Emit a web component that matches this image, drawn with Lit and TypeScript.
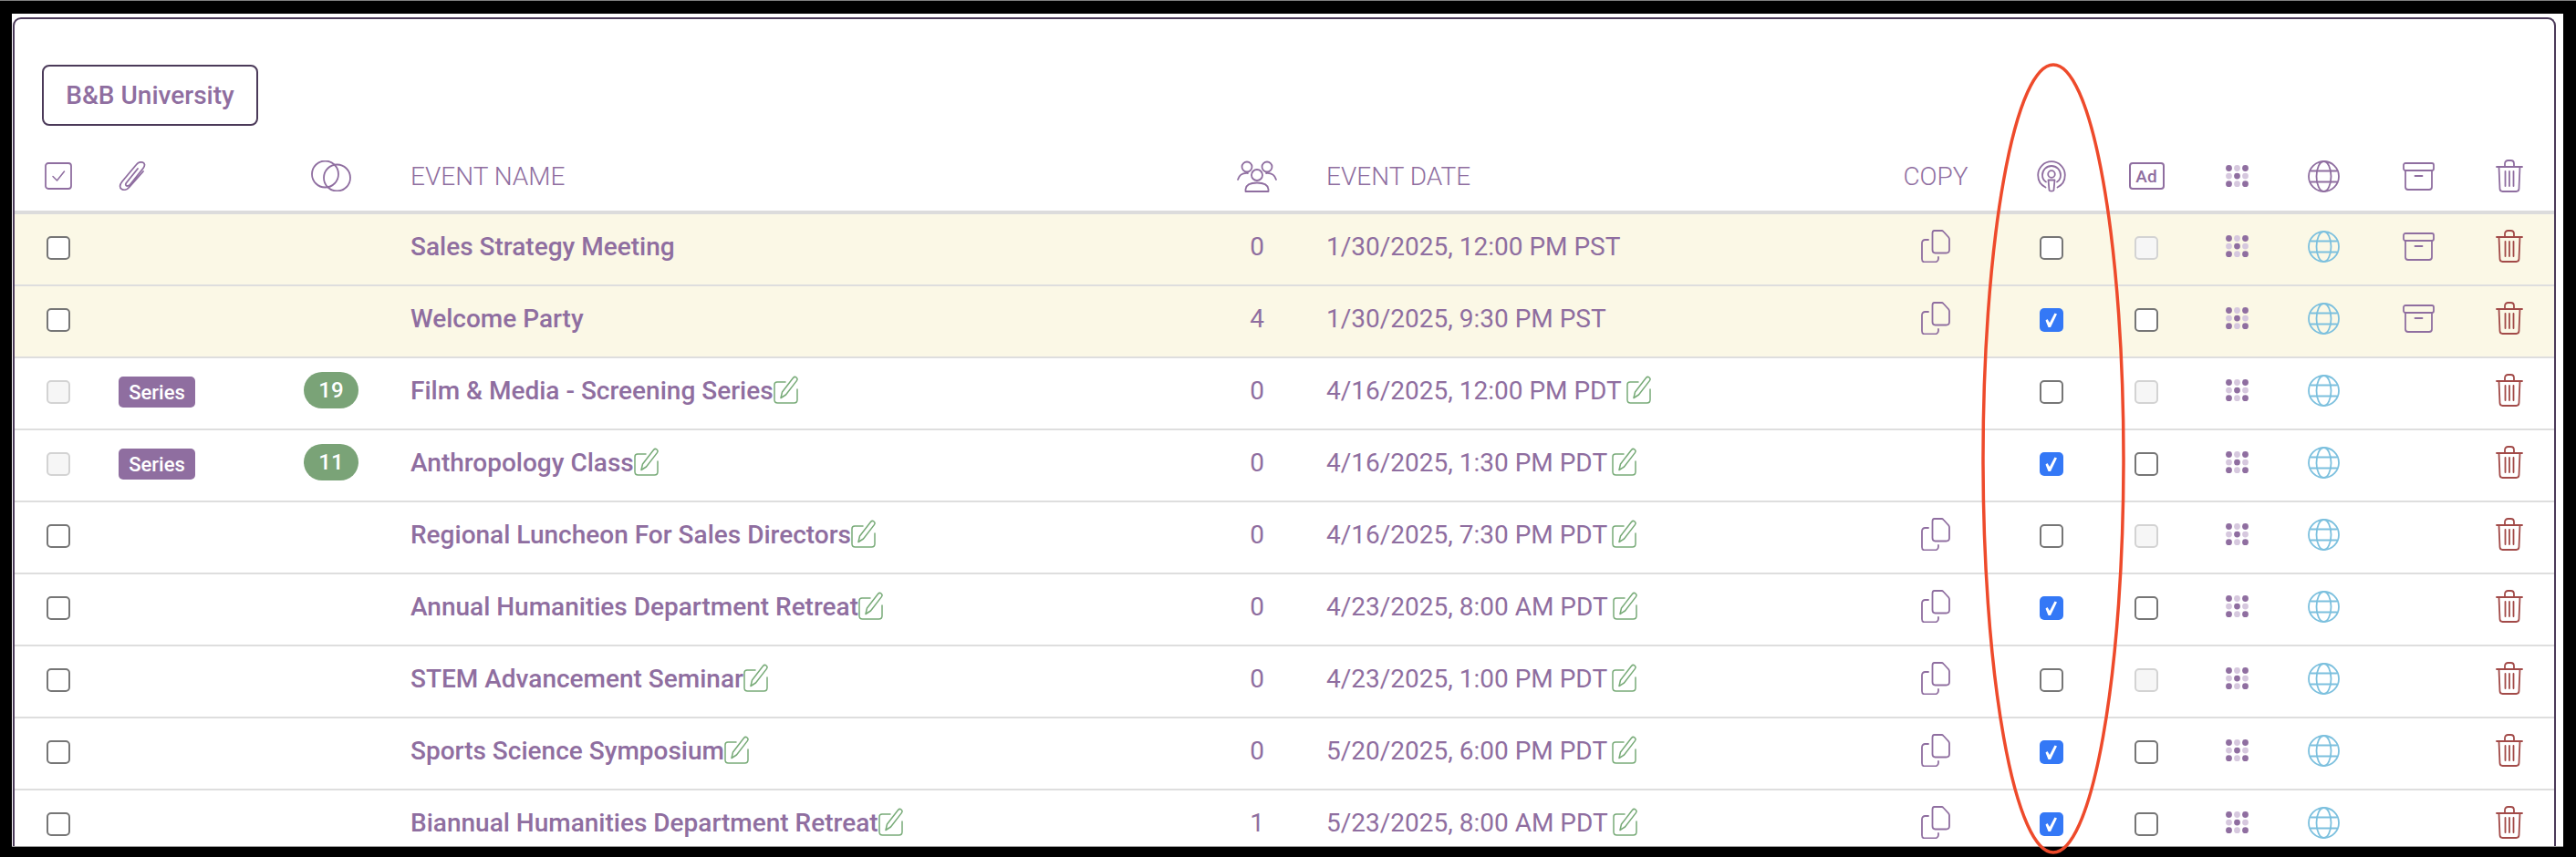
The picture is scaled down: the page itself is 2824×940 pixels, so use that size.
import { LitElement, html, css, svg } from "lit";
import { customElement } from "lit/decorators.js";

type Ck = "off" | "on" | "dis";
interface Row {
  name: string; date: string; count: number; hl?: boolean; series?: number; edit?: boolean;
  left: Ck; pod: Ck; ad: Ck; copy: boolean; archive?: boolean;
}

const rows: Row[] = [
  { name: "Sales Strategy Meeting", date: "1/30/2025, 12:00 PM PST", count: 0, hl: true, left: "off", pod: "off", ad: "dis", copy: true, archive: true },
  { name: "Welcome Party", date: "1/30/2025, 9:30 PM PST", count: 4, hl: true, left: "off", pod: "on", ad: "off", copy: true, archive: true },
  { name: "Film & Media - Screening Series", date: "4/16/2025, 12:00 PM PDT", count: 0, series: 19, edit: true, left: "dis", pod: "off", ad: "dis", copy: false },
  { name: "Anthropology Class", date: "4/16/2025, 1:30 PM PDT", count: 0, series: 11, edit: true, left: "dis", pod: "on", ad: "off", copy: false },
  { name: "Regional Luncheon For Sales Directors", date: "4/16/2025, 7:30 PM PDT", count: 0, edit: true, left: "off", pod: "off", ad: "dis", copy: true },
  { name: "Annual Humanities Department Retreat", date: "4/23/2025, 8:00 AM PDT", count: 0, edit: true, left: "off", pod: "on", ad: "off", copy: true },
  { name: "STEM Advancement Seminar", date: "4/23/2025, 1:00 PM PDT", count: 0, edit: true, left: "off", pod: "off", ad: "dis", copy: true },
  { name: "Sports Science Symposium", date: "5/20/2025, 6:00 PM PDT", count: 0, edit: true, left: "off", pod: "on", ad: "off", copy: true },
  { name: "Biannual Humanities Department Retreat", date: "5/23/2025, 8:00 AM PDT", count: 1, edit: true, left: "off", pod: "on", ad: "off", copy: true },
];

const P = "#8f6ea0";
const ic = (w: number, h: number, body: unknown, cls = "") =>
  html`<svg class="ic ${cls}" width=${w} height=${h} viewBox="0 0 ${w} ${h}" fill="none" stroke="currentColor" stroke-width="1.800" stroke-linecap="round" stroke-linejoin="round">${body}</svg>`;

const iconCheckBox = () => ic(30, 30, svg`<rect x="1" y="1" width="28" height="28" rx="3"/><path d="M9 15.500l4.500 4.500L21.500 10" stroke-width="1.500"/>`);
const iconClip = () => ic(30, 32, svg`<path d="M21 8L8.500 23.500C7 25.500 8 27 9.500 27 11 27 12 26.500 13 25L27 7.500C29.500 4 28.500 2 26.500 1.200 24 .3 21.500 1 19.500 3.500L4 22C.8 26 1 29 3.500 30.500 6 32 9.500 31 12 28L27 11"/>`);
const iconRings = () => ic(44, 34, svg`<circle cx="15.500" cy="15" r="14.500" /><circle cx="28.500" cy="19" r="14.500"/>`);
const iconPeople = () => ic(44, 35, svg`<circle cx="11" cy="7" r="5.500"/><circle cx="33" cy="7" r="5.500"/><circle cx="22" cy="16" r="6"/><path d="M1 21c1.500-5 5-7.500 11-7"/><path d="M43 21c-1.500-5-5-7.500-11-7"/><path d="M9.500 34v-2.500C10 27 15 24.500 22 24.500s12 2.500 12.500 7V34z"/>`);
const iconPod = () => ic(32, 35, svg`<path d="M9.500 29.500C4.500 27 1.200 22 1.200 16 1.200 7.800 7.800 1.200 16 1.200S30.800 7.800 30.800 16c0 6-3.300 11-8.300 13.500"/><path d="M10 23.500C7.500 22 6 19.200 6 16c0-5.500 4.500-10 10-10s10 4.500 10 10c0 3.200-1.500 6-4 7.500"/><circle cx="16" cy="15" r="3.800"/><path d="M12.500 21.500h7l-1 11c-.2 1.600-4.800 1.600-5 0z"/>`);
const iconAd = () => html`<span class="ad">Ad</span>`;
const iconDots = () => {
  const dots = [];
  for (let r = 0; r < 3; r++) for (let c = 0; c < 3; c++) {
    const dark = (r + c) % 2 === 0;
    dots.push(svg`<circle cx=${3.500 + c * 9} cy=${3.500 + r * 8.600} r="3.400" fill=${dark ? P : "#d6c8de"} stroke="none"/>`);
  }
  return ic(25, 25, dots);
};
const iconGlobe = (cls = "") => ic(35, 35, svg`<circle cx="17.500" cy="17.500" r="16.500"/><ellipse cx="17.500" cy="17.500" rx="8" ry="16.500"/><path d="M3.500 11.500h28M3.500 23.500h28"/>`, cls);
const iconArchive = () => ic(35, 31, svg`<rect x="1" y="1" width="33" height="8" rx="2"/><path d="M3 9v18c0 2 1 3 3 3h23c2 0 3-1 3-3V9"/><path d="M13.500 15h8"/>`);
const iconTrash = (cls = "") => ic(30, 36, svg`<path d="M1 8h28"/><path d="M10 8V4.500C10 2.500 11.500 1 13.500 1h3C18.500 1 20 2.500 20 4.500V8"/><path d="M3.500 8l1 24c.1 1.800 1.300 3 3 3h15c1.700 0 2.900-1.200 3-3l1-24"/><path d="M10.500 13v16M15 13v16M19.500 13v16"/>`, cls);
const iconCopy = () => ic(32, 36, svg`<path d="M17 1h-2.500C13.500 1 12.500 2 12.500 4v18c0 2 1 3.500 3 3.500h12c2 0 3.500-1.500 3.500-3.500V10.500c0-1-.5-1.800-1-2.500l-5.500-6c-.6-.7-1.300-1-2-1z"/><path d="M8 11H4.500C2.500 11 1 12.500 1 14.500V32c0 2 1.500 3.500 3.500 3.500H15c2 0 4-1.500 4-4v-1.500" />`);
const iconEdit = () => ic(27, 31, svg`<path d="M13 7H4C2 7 1 8.500 1 10v16.500C1 28.500 2.500 30 4.500 30h18c2 0 3.500-1.500 3.500-3.500V15" stroke-width="1.500"/><path d="M8 24.500l1.500-6.500L21.500 2.500c1-1.200 2.400-1.400 3.500-.5 1.100.9 1.300 2.400.4 3.600L13.500 21z" stroke-width="1.500"/>`, "edit");

const box = (s: Ck) => html`<span class="box ${s}">${s === "on"
  ? html`<svg width="26" height="26" viewBox="0 0 26 26"><path d="M6.500 13.500l2-1.500 2.500 4L16.500 5.500l2.500 1L12 21h-2.500z" fill="#fff"/></svg>` : ""}</span>`;

@customElement("app-root")
export class AppRoot extends LitElement {
  static styles = css`
    :host { display: block; position: relative; width: 2824px; height: 940px; overflow: hidden; background: #000; font-family: Roboto, "Liberation Sans", sans-serif; color: #8f6ea0; }
    .topline { height: 1px; background: #808080; }
    .screen { box-sizing: border-box; margin: 14px 14px 0 13px; height: 914px; padding: 4px 8px 0 1px; background: #fff; border-bottom: 1px solid #9a9a9a; }
    .card { box-sizing: border-box; height: 100%; overflow: hidden; border: 2px solid #4b3a59; border-bottom: 0; border-radius: 9px 9px 0 0; padding-top: 50px; }
    .btn { box-sizing: border-box; width: 237px; height: 67px; margin-left: 30px; display: flex; align-items: center; justify-content: center; border: 2px solid #4b3a59; border-radius: 8px; font-size: 28px; font-weight: 500; color: #8f6ea0; }
    .grid { display: grid; grid-template-columns: 96px 211px 80px 935px 80px 627px 154px 100px 108px 90px 101px 106px 94px; padding-right: 2px; align-items: center; justify-items: center; }
    .head { box-sizing: border-box; height: 97px; padding-top: 17px; border-bottom: 4px solid #dcdcdc; font-size: 28px; font-weight: 300; }
    .row { box-sizing: border-box; height: 79px; padding-bottom: 3px; border-bottom: 2px solid #dedede; font-size: 28px; }
    .row.hl { background: #fbf8e6; }
    .l { justify-self: start; }
    .c2 { padding-left: 18px; }
    .c4 { padding-left: 47px; }
    .c6 { padding-left: 36px; }
    .name { display: flex; align-items: center; font-weight: 500; margin-top: -3px; white-space: nowrap; }
    .date { display: flex; align-items: center; margin-top: -3px; white-space: nowrap; gap: 5px; }
    .num { margin-top: -3px; }
    .ic { display: block; color: #8f6ea0; flex: none; }
    .rowic { margin-bottom: 4px; }
    .ic.edit { color: #78ab78; margin-top: -3px; }
    .ic.blue { color: #7cc0de; }
    .ic.red { color: #a24a48; }
    .box { box-sizing: border-box; display: block; width: 26px; height: 26px; border-radius: 5px; border: 2px solid #767676; background: #fff; }
    .box.dis { border-color: #d3d3d3; background: #f6f6f6; }
    .box.on { border: 0; background: #3478f6; }
    .box svg { display: block; }
    .badge { box-sizing: border-box; width: 84px; height: 34px; display: flex; align-items: center; justify-content: center; background: #8f6ea0; color: #fff; border-radius: 5px; font-size: 22px; font-weight: 500; }
    .pill { width: 60px; height: 40px; display: flex; align-items: center; justify-content: center; background: #7aa377; color: #fff; border-radius: 20px; font-size: 24px; font-weight: 500; margin-bottom: 4px; }
    .ad { box-sizing: border-box; width: 39px; height: 30px; display: flex; align-items: center; justify-content: center; border: 2px solid #8f6ea0; border-radius: 4px; font-size: 19px; font-weight: 500; color: #8f6ea0; }
    .ring { position: absolute; left: 0; top: 0; pointer-events: none; }
  `;

  render() {
    return html`
      <div class="topline"></div>
      <div class="screen">
        <div class="card">
          <div class="btn">B&amp;B University</div>
          <div class="grid head">
            ${iconCheckBox()}
            <span class="l c2">${iconClip()}</span>
            ${iconRings()}
            <span class="l c4">EVENT NAME</span>
            ${iconPeople()}
            <span class="l c6">EVENT DATE</span>
            <span>COPY</span>
            ${iconPod()}
            ${iconAd()}
            ${iconDots()}
            ${iconGlobe()}
            ${iconArchive()}
            ${iconTrash()}
          </div>
          ${rows.map(r => html`
            <div class="grid row ${r.hl ? "hl" : ""}">
              ${box(r.left)}
              <span class="l c2">${r.series ? html`<span class="badge">Series</span>` : ""}</span>
              <span>${r.series ? html`<span class="pill">${r.series}</span>` : ""}</span>
              <span class="l c4 name">${r.name}${r.edit ? iconEdit() : ""}</span>
              <span class="num">${r.count}</span>
              <span class="l c6 date">${r.date}${r.edit ? iconEdit() : ""}</span>
              <span class="rowic">${r.copy ? iconCopy() : ""}</span>
              ${box(r.pod)}
              ${box(r.ad)}
              <span class="rowic">${iconDots()}</span>
              <span class="rowic">${iconGlobe("blue")}</span>
              <span class="rowic">${r.archive ? iconArchive() : ""}</span>
              <span class="rowic">${iconTrash("red")}</span>
            </div>`)}
        </div>
      </div>
      <svg class="ring" width="2824" height="940" fill="none"><ellipse cx="2251" cy="503" rx="77" ry="432" stroke="#ee4a2b" stroke-width="3.500"/></svg>
    `;
  }
}
